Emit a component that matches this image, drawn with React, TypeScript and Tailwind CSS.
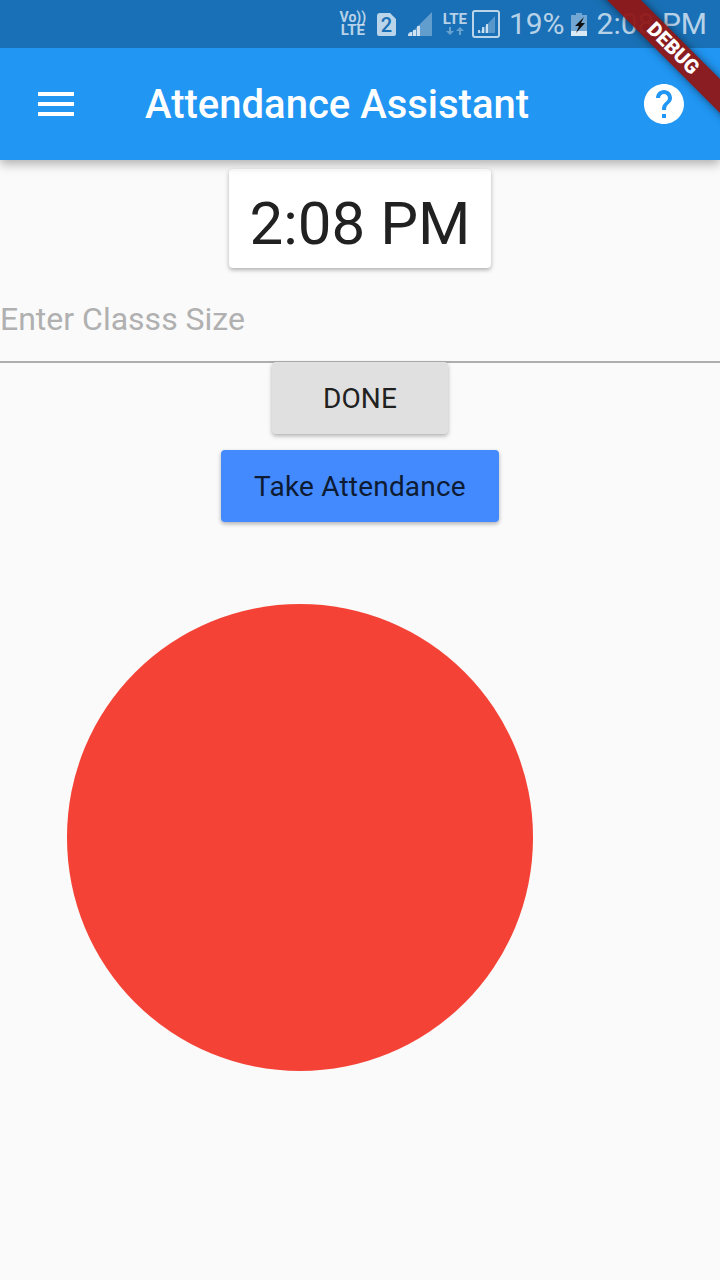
const roboto = "font-['Roboto',sans-serif]";

function StatusIcons() {
  return (
    <div className="flex items-center text-white/70">
      <div className="mr-[12px] flex w-[24px] flex-col items-center font-['Roboto',sans-serif] text-[15px] font-bold leading-[13px]">
        <span className="text-[14px]">Vo))</span>
        <span>LTE</span>
      </div>
      <svg width="19" height="23" viewBox="0 0 19 23" className="mr-[12px]">
        <path d="M3 0h10l6 6v15a2 2 0 0 1-2 2H2a2 2 0 0 1-2-2V3a3 3 0 0 1 3-3z" fill="currentColor" />
        <text x="9.5" y="18.5" textAnchor="middle" fontFamily="Roboto" fontWeight="500" fontSize="20" fill="#1970b6">2</text>
      </svg>
      <svg width="24" height="24" viewBox="0 0 24 24" className="mr-[10px]">
        <path d="M24 0v24H0z" fill="currentColor" opacity="0.45" />
        <path d="M2 20h2v4H0v-2zM5 18h3v6H5zM9 14h3v10H9z" fill="currentColor" />
      </svg>
      <div className="mr-[4px] flex w-[26px] flex-col items-center font-['Roboto',sans-serif] text-[15px] font-bold leading-[13px]">
        <span>LTE</span>
        <svg width="18" height="8" viewBox="0 0 18 8" className="mt-[1px] opacity-50">
          <path d="M3 0h2v4h3L4 8 0 4h3zM13 8h2V4h3l-4-4-4 4h3z" fill="currentColor" />
        </svg>
      </div>
      <svg width="28" height="28" viewBox="0 0 28 28" className="mr-[9px]">
        <rect x="1" y="1" width="26" height="26" rx="2" fill="none" stroke="currentColor" strokeWidth="2" />
        <path d="M23 6v17H7z" fill="currentColor" opacity="0.4" />
        <path d="M6 20h2v3H6zM10 17h2v6h-2zM14 14h2v9h-2z" fill="currentColor" />
      </svg>
      <span className={`${roboto} mr-[6px] text-[30px] leading-none`}>19%</span>
      <svg width="16" height="23" viewBox="0 0 16 23" className="mr-[10px]">
        <path d="M5 0h6v2h5v21H0V2h5z" fill="currentColor" opacity="0.55" />
        <path d="M0 18h16v5H0z" fill="#ffffff" opacity="0.75" />
        <path d="M13 4 4 13h4l-3 7 9-10h-4z" fill="#111" />
      </svg>
      <span className={`${roboto} text-[30px] leading-none`}>2:08 PM</span>
    </div>
  );
}

export default function App() {
  return (
    <div className={`relative flex h-[1280px] w-[720px] flex-col overflow-hidden bg-[#fafafa] ${roboto}`}>
      <header className="relative z-10 flex h-[160px] shrink-0 flex-col bg-[#2196f3] shadow-[0_4px_10px_rgba(0,0,0,0.3)]">
        <div className="flex h-[48px] items-center justify-end bg-[#1970b6] pr-[13px]">
          <StatusIcons />
        </div>
        <div className="flex h-[112px] items-center">
          <button className="ml-[38px] flex w-[36px] flex-col gap-[6px]">
            <span className="h-[4px] w-[36px] bg-white" />
            <span className="h-[4px] w-[36px] bg-white" />
            <span className="h-[4px] w-[36px] bg-white" />
          </button>
          <h1 className="ml-[71px] pt-[2px] text-[40px] font-medium leading-none text-white">Attendance Assistant</h1>
          <svg width="48" height="48" viewBox="0 0 24 24" className="ml-auto mr-[32px]">
            <path
              fill="#ffffff"
              d="M12 2C6.48 2 2 6.48 2 12s4.48 10 10 10 10-4.48 10-10S17.52 2 12 2zm1 17h-2v-2h2v2zm2.07-7.75l-.9.92C13.45 12.9 13 13.5 13 15h-2v-.5c0-1.1.45-2.1 1.17-2.83l1.24-1.26c.37-.36.59-.86.59-1.41 0-1.1-.9-2-2-2s-2 .9-2 2H8c0-2.21 1.79-4 4-4s4 1.79 4 4c0 .88-.36 1.68-.93 2.25z"
            />
          </svg>
        </div>
      </header>

      <div className="flex flex-col items-center">
        <div className="mt-[9px] flex h-[99px] w-[262px] items-center justify-center rounded-[4px] bg-white pt-[10px] shadow-[0_2px_4px_rgba(0,0,0,0.3)]">
          <span className="text-[60px] leading-none text-[#212121]">2:08 PM</span>
        </div>
        <div className="flex h-[95px] w-full items-center border-b-2 border-[#aeaeae] pt-[8px]">
          <span className="text-[32px] leading-none text-[#b0b0b0]">Enter Classs Size</span>
        </div>
        <button className="-mt-[1px] flex h-[72px] w-[176px] items-center justify-center rounded-[4px] bg-[#e0e0e0] pt-[2px] text-[28px] font-[450] leading-none tracking-[0.1px] text-[#212121] shadow-[0_2px_4px_rgba(0,0,0,0.3)]">
          DONE
        </button>
        <button className="mt-[16px] flex h-[72px] w-[278px] items-center justify-center rounded-[4px] bg-[#448aff] pt-[2px] text-[28px] font-[450] leading-none tracking-[0.2px] text-[#0d1b33] shadow-[0_2px_4px_rgba(0,0,0,0.3)]">
          Take Attendance
        </button>
        <div className="mr-[120px] mt-[82px] h-[466.67px] w-[466.67px] rounded-full bg-[#f44336]" />
      </div>

      {/* debug ribbon sits over the app bar */}
      <div className="absolute left-[552px] top-[36px] z-20 flex h-[24px] w-[240px] rotate-45 items-center justify-center bg-[#8f1616]/95 pb-[2px] pl-[2px] shadow-[0_0_8px_rgba(0,0,0,0.5)]">
        <span className="text-[20px] font-black leading-none text-white">DEBUG</span>
      </div>
    </div>
  );
}
